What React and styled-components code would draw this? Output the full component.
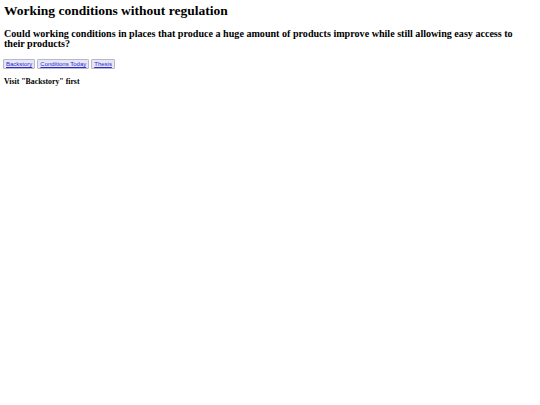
import styled, { createGlobalStyle } from "styled-components";

const Global = createGlobalStyle`
    html, body {
        margin: 0;
        padding: 0;
        background: #fff;
    }
    body {
        font-family: "Liberation Serif", "Times New Roman", serif;
        color: #000;
    }
`;

const Page = styled.div`
    padding: 3px 4px;
`;

const Title = styled.h1`
    margin: 0 0 10px;
    font-size: 13.5px;
    font-weight: 700;
    line-height: 16px;
`;

const Question = styled.h2`
    max-width: 514px;
    margin: 0 0 10px;
    font-size: 10.1px;
    font-weight: 700;
    line-height: 10px;
`;

const Tabs = styled.div`
    display: flex;
    gap: 2px;
    margin: 0 0 8px -1px;
`;

const Tab = styled.button`
    padding: 1px 2px;
    background: #e6e6f4;
    border: 1px solid #b8b8c8;
    border-radius: 1px;
    font-family: "Liberation Sans", Arial, sans-serif;
    font-size: 6px;
    line-height: 6px;
    color: #2a2ad0;
    text-decoration: underline;
    cursor: pointer;
`;

const Note = styled.h3`
    margin: 0;
    font-size: 7.8px;
    font-weight: 700;
    line-height: 9px;
`;

const tabs = ["Backstory", "Conditions Today", "Thesis"];

const App = () => {
    return (
        <>
            <Global />
            <Page>
                <Title>Working conditions without regulation</Title>
                <Question>
                    Could working conditions in places that produce a huge
                    amount of products improve while still allowing easy
                    access to their products?
                </Question>
                <Tabs>
                    {tabs.map((t) => (
                        <Tab key={t}>{t}</Tab>
                    ))}
                </Tabs>
                <Note>Visit "Backstory" first</Note>
            </Page>
        </>
    );
};

export default App;
